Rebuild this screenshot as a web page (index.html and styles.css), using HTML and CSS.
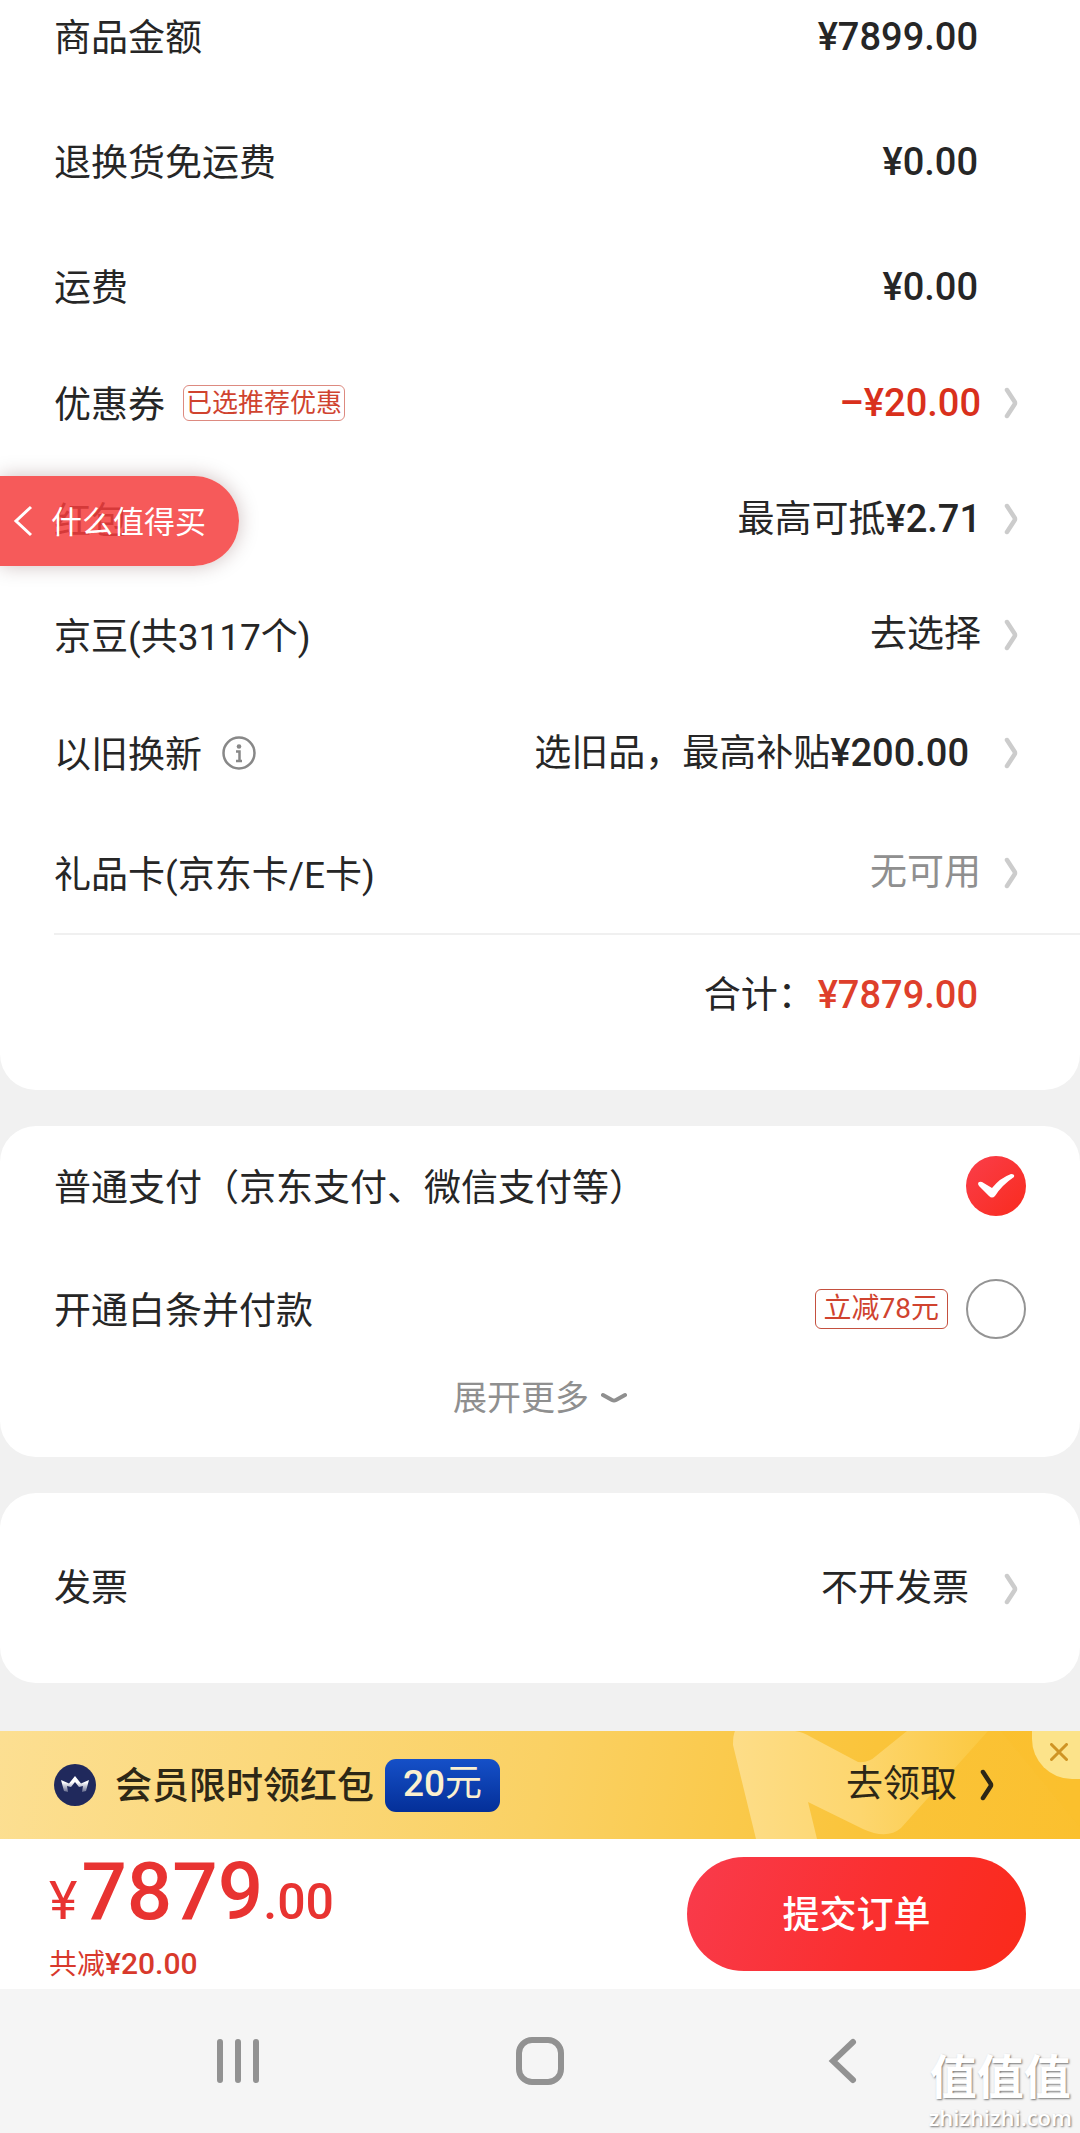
FILE: index.html
```html
<!DOCTYPE html>
<html lang="zh-CN">
<head>
<meta charset="utf-8">
<meta name="viewport" content="width=device-width, initial-scale=1">
<title>填写订单</title>
<link rel="stylesheet" href="styles.css">
</head>
<body>
<svg class="defs" aria-hidden="true">
  <symbol id="chevron" viewBox="0 0 14 32"><path d="M3 3 10.500 14.500Q11.500 16 10.500 17.500L3 29" fill="none" stroke="currentColor" stroke-width="4.500" stroke-linecap="round"/></symbol>
</svg>
<div class="page">
  <main class="cards">
    <section class="card summary">
      <dl class="fees">
        <div class="fee"><dt>商品金额</dt><dd>¥7899.00</dd></div>
        <div class="fee"><dt>退换货免运费</dt><dd>¥0.00</dd></div>
        <div class="fee"><dt>运费</dt><dd>¥0.00</dd></div>
      </dl>
      <nav class="options">
        <a class="option" href="#coupon">
          <span class="label">优惠券</span><span class="tag">已选推荐优惠</span>
          <span class="value"><b class="red">–¥20.00</b></span><svg class="chevron"><use href="#chevron"/></svg>
        </a>
        <a class="option" href="#redpacket">
          <span class="label">红包</span>
          <span class="value">最高可抵<b>¥2.71</b></span><svg class="chevron"><use href="#chevron"/></svg>
        </a>
        <a class="option" href="#beans">
          <span class="label">京豆(共3117个)</span>
          <span class="value">去选择</span><svg class="chevron"><use href="#chevron"/></svg>
        </a>
        <a class="option tall wide-gap" href="#tradein">
          <span class="label">以旧换新</span>
          <svg class="info" viewBox="0 0 34 34" aria-hidden="true"><circle cx="17" cy="17" r="15.500" fill="none" stroke="#888" stroke-width="2.500"/><circle cx="17" cy="10.500" r="2.300" fill="#888"/><path d="M14 15.500H17.500V24.500M14 25H20" fill="none" stroke="#888" stroke-width="2.500"/></svg>
          <span class="value">选旧品，最高补贴<b>¥200.00</b></span><svg class="chevron"><use href="#chevron"/></svg>
        </a>
        <a class="option tall" href="#giftcard">
          <span class="label">礼品卡(京东卡/E卡)</span>
          <span class="value muted">无可用</span><svg class="chevron"><use href="#chevron"/></svg>
        </a>
      </nav>
      <p class="total">合计：<b>¥7879.00</b></p>
    </section>

    <section class="card payment">
      <div class="pay">
        <label for="pay-normal">普通支付（京东支付、微信支付等）</label>
        <span class="pick">
          <input type="radio" name="pay" id="pay-normal" checked>
          <svg viewBox="0 0 60 60" aria-hidden="true"><path d="M12 28Q12 25 16 26L26 32Q34 22 45 18Q49 18 48 21Q36 29 29 40Q26 43 23 40L13 30Z" fill="#fff"/></svg>
        </span>
      </div>
      <div class="pay">
        <label for="pay-credit">开通白条并付款</label>
        <span class="tag large">立减78元</span>
        <span class="pick"><input type="radio" name="pay" id="pay-credit"></span>
      </div>
      <button class="more" type="button">展开更多
        <svg viewBox="0 0 26 12" aria-hidden="true"><path d="M2 3 11 8Q13 9 15 8L24 3" fill="none" stroke="currentColor" stroke-width="4" stroke-linecap="round"/></svg>
      </button>
    </section>

    <section class="card invoice">
      <a class="option wide-gap" href="#invoice">
        <span>发票</span>
        <span class="value">不开发票</span><svg class="chevron"><use href="#chevron"/></svg>
      </a>
    </section>
  </main>

  <aside class="banner">
    <svg class="banner-art" viewBox="0 0 347 108" aria-hidden="true">
      <defs><linearGradient id="m" x1="0" x2="1"><stop offset="0" stop-color="#fddd88"/><stop offset=".5" stop-color="#fdd66e"/><stop offset="1" stop-color="#fbc840"/></linearGradient></defs>
      <path d="M2 0H62Q70 1 78 6L125 31Q136 32 143 25L174 0H255L168 97Q154 109 130 98L75 71 84 108H23L0 14Q0 4 2 0Z" fill="url(#m)"/>
      <path d="M268 0H347V96Z" fill="#fbc02a" opacity=".3"/>
    </svg>
    <svg class="crown" viewBox="0 0 42 42" aria-hidden="true">
      <defs><linearGradient id="c" x1="0" y1="0" x2="0" y2="1"><stop offset=".4" stop-color="#fff"/><stop offset="1" stop-color="#fff" stop-opacity=".3"/></linearGradient></defs>
      <circle cx="21" cy="21" r="21" fill="#20295c"/><path d="M10 27 7 16 15 19.500 21 12 27 19.500 35 16 32 27 28 28 29 22 25 23 21 18 17 23 13 22 14 28Z" fill="url(#c)"/></svg>
    <strong>会员限时领红包</strong>
    <span class="amount"><b>20</b>元</span>
    <a class="claim" href="#claim">去领取<svg class="chevron"><use href="#chevron"/></svg></a>
    <button class="close" type="button" aria-label="关闭"><svg viewBox="0 0 18 18" aria-hidden="true"><path d="M1.500 1.500 16.500 16.500M16.500 1.500 1.500 16.500" stroke="#cf9424" stroke-width="3" stroke-linecap="round"/></svg></button>
  </aside>

  <footer class="checkout">
    <div>
      <p class="price"><span class="yen">¥</span><span class="big">7879</span>.00</p>
      <p class="saved">共减<b>¥20.00</b></p>
    </div>
    <button class="submit" type="button">提交订单</button>
  </footer>

  <nav class="system">
    <button type="button" aria-label="最近"><svg viewBox="0 0 48 48"><path d="M6 5V43M24 5V43M42 5V43" stroke="#929292" stroke-width="6" stroke-linecap="round"/></svg></button>
    <button type="button" aria-label="主页"><svg viewBox="0 0 48 48"><rect x="3" y="3" width="42" height="42" rx="13" fill="none" stroke="#929292" stroke-width="6"/></svg></button>
    <button type="button" aria-label="返回"><svg viewBox="0 0 48 48"><path d="M35 5 15 24 35 43" fill="none" stroke="#929292" stroke-width="6" stroke-linecap="round"/></svg></button>
  </nav>

  <a class="return" href="#back"><svg viewBox="0 0 20 32" aria-hidden="true"><path d="M18 2 3 16 18 30" fill="none" stroke="#fff" stroke-width="3"/></svg><span>什么值得买</span></a>
  <div class="watermark"><span>值值值</span><span class="site">zhizhizhi.com</span></div>
</div>
</body>
</html>
```
FILE: styles.css
```css
* { box-sizing: border-box; }

body {
  margin: 0;
  background: #f1f1f1;
  color: #262626;
  font: 37px/50px Roboto, "Noto Sans CJK SC", sans-serif;
}

p, dl, dd { margin: 0; }
b, strong { font-weight: 500; }
a { color: inherit; text-decoration: none; }
button {
  border: 0;
  padding: 0;
  background: none;
  color: inherit;
  font: inherit;
}
svg { display: block; flex: none; }

.defs { position: absolute; width: 0; height: 0; }
.page { position: relative; }

.cards {
  display: flex;
  flex-direction: column;
  gap: 36px;
  padding-bottom: 48px;
}
.card {
  background: #fff;
  border-radius: 36px;
}
.summary { border-radius: 0 0 36px 36px; }

.fees {
  display: flex;
  flex-direction: column;
  gap: 73px;
  padding: 12px 102px 31px 54px;
}
.fee {
  display: flex;
  justify-content: space-between;
}
.fee dt { padding-top: 2px; }
.fee dd,
.value b,
.total b {
  font-size: 38px;
  font-weight: 500;
}

.option {
  display: flex;
  align-items: center;
  height: 116px;
  padding: 0 62px 0 54px;
}
.option.tall { height: 120px; }
.label { padding-top: 6px; }
.value {
  margin: 0 23px 0 auto;
}
.wide-gap .value { margin-right: 35px; }
.red { color: #d9301c; }
.muted { color: #8f8f8f; }
.chevron {
  width: 14px;
  height: 32px;
  color: #ccc;
}
.info {
  width: 34px;
  height: 34px;
  margin-left: 20px;
}

.tag {
  margin-left: 18px;
  padding: 0 2px;
  border: 1px solid #dd8a80;
  border-radius: 6px;
  color: #d0432f;
  font-size: 26px;
  line-height: 34px;
}
.tag.large {
  padding: 0 8px;
  border-color: #c4503f;
  font-size: 28px;
  line-height: 38px;
}

.total {
  margin-left: 54px;
  padding: 35px 102px 69px 0;
  border-top: 2px solid #f0f0f0;
  text-align: right;
}
.total b {
  margin-left: 3px;
  color: #de3f2b;
}

.payment {
  display: flex;
  flex-direction: column;
  gap: 3px;
  padding-bottom: 33px;
}
.pay {
  display: flex;
  align-items: center;
  gap: 18px;
  height: 120px;
  padding: 0 54px;
}
.pay label {
  flex: 1;
  padding-top: 6px;
}
.pay .tag { margin: 0; }
.pick { display: grid; }
.pick > * {
  grid-area: 1 / 1;
  width: 60px;
  height: 60px;
}
.pick input {
  appearance: none;
  margin: 0;
  border: 2px solid #949494;
  border-radius: 50%;
}
.pick input:checked {
  border: 0;
  background: linear-gradient(135deg, #fa3e4a, #f92b1e);
}
.pick svg { pointer-events: none; }
.more {
  display: flex;
  align-items: center;
  justify-content: center;
  gap: 12px;
  height: 52px;
  color: #8f8f8f;
  font-size: 34px;
}
.more svg { width: 26px; height: 12px; }

.invoice { padding: 38px 0 36px; }

.banner {
  position: relative;
  display: flex;
  align-items: center;
  height: 108px;
  padding: 0 86px 0 54px;
  background: linear-gradient(100deg, #fcdf92, #fad164 50%, #fac43a 80%, #fbc02e);
  color: #2d2716;
}
.banner > * { position: relative; }
.banner .banner-art {
  position: absolute;
  top: 0;
  right: 0;
  width: 347px;
  height: 108px;
}
.crown { width: 42px; height: 42px; }
.banner strong {
  margin: 0 11px 0 19px;
  padding-top: 4px;
}
.amount {
  padding: 0 18px 3px;
  border-radius: 11px;
  background: linear-gradient(#1550c8, #042f98);
  color: #fbf0cf;
}
.claim {
  display: flex;
  align-items: center;
  gap: 23px;
  margin-left: auto;
}
.claim .chevron { color: #2d2716; }
.banner .close {
  position: absolute;
  top: 0;
  right: 0;
  display: grid;
  place-content: center;
  width: 48px;
  height: 48px;
  padding: 0 0 6px 6px;
  border-bottom-left-radius: 40px;
  background: #fce38a;
}
.close svg { width: 18px; height: 18px; }

.checkout {
  display: flex;
  align-items: center;
  justify-content: space-between;
  height: 150px;
  padding: 0 54px 0 49px;
  background: #fff;
}
.price {
  padding-top: 6px;
  color: #e83331;
  font-size: 50px;
  font-weight: 500;
  line-height: 84px;
}
.yen {
  margin-right: 4px;
  font-size: 54px;
  font-weight: 400;
}
.big { font-size: 80px; }
.saved {
  color: #d8392c;
  font-size: 28px;
  line-height: 40px;
}
.saved b { font-size: 30px; }
.submit {
  width: 339px;
  height: 114px;
  padding-top: 4px;
  border-radius: 57px;
  background: linear-gradient(110deg, #f93b4c, #fa2f2f 55%, #fa2a1a);
  color: #fff;
  font-weight: 500;
}

.system {
  display: flex;
  justify-content: center;
  gap: 254px;
  height: 144px;
  background: #f5f5f5;
}
.system svg { width: 48px; height: 48px; }

.return {
  position: absolute;
  top: 476px;
  left: 0;
  display: flex;
  align-items: center;
  gap: 18px;
  height: 90px;
  padding: 0 33px 0 13px;
  border-radius: 0 45px 45px 0;
  background: rgba(244, 61, 61, .85);
  box-shadow: 0 0 20px rgba(60, 0, 0, .25);
  color: #fff;
  font-size: 31px;
}
.return span { padding-top: 4px; }
.return svg { width: 20px; height: 32px; }

.watermark {
  position: absolute;
  right: 8px;
  bottom: 4px;
  display: flex;
  flex-direction: column;
  align-items: center;
  color: #fff;
  font-size: 47px;
  font-weight: 700;
  line-height: 54px;
  text-shadow: 1px 1px 2px #777;
}
.site {
  font: 600 22px/24px "Open Sans", sans-serif;
}
```
